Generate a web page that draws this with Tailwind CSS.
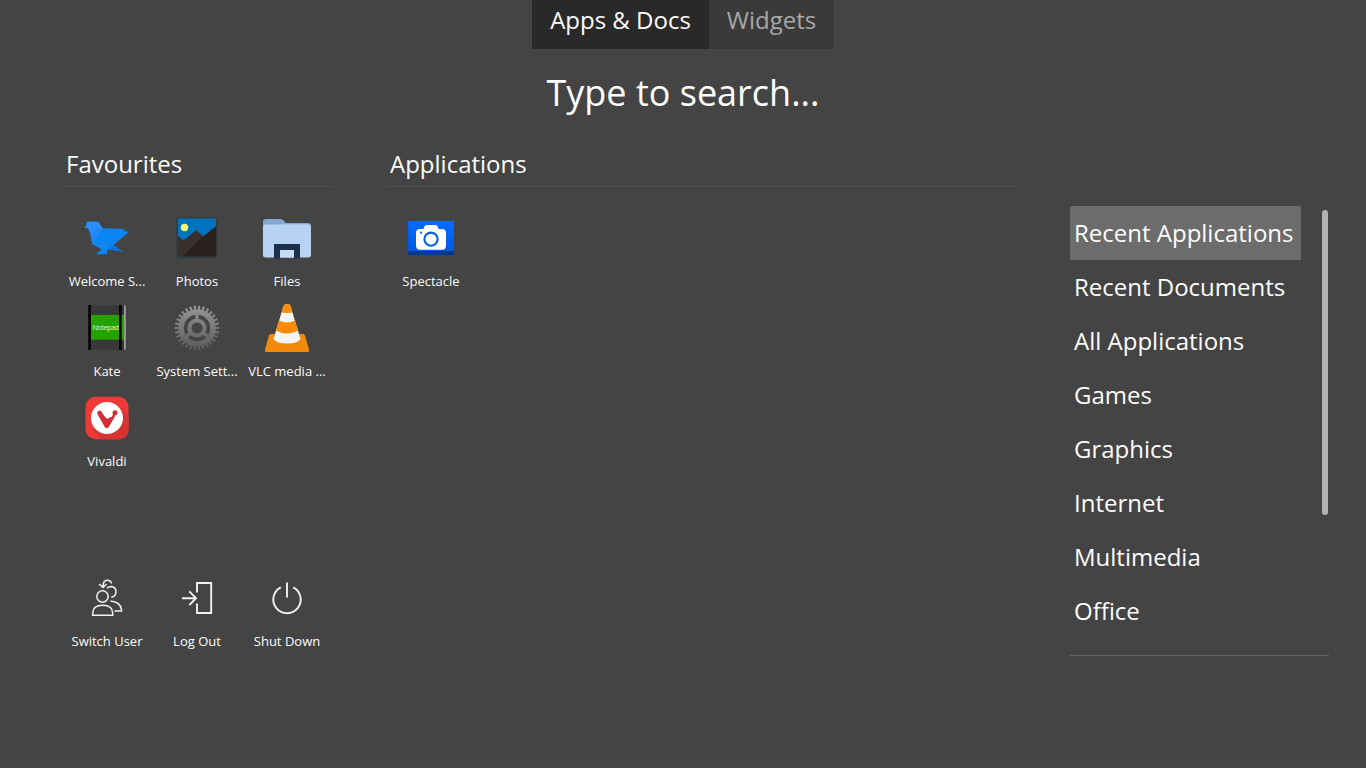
<!DOCTYPE html>
<html lang="en">
<head>
<meta charset="utf-8">
<title>Application Dashboard</title>
<script src="https://cdn.jsdelivr.net/npm/@tailwindcss/browser@4"></script>
</head>
<body class="bg-[#444444] overflow-hidden">
<div class="w-[1366px] h-[768px] bg-[#444444] text-[#fcfcfc] font-['Open_Sans',sans-serif] flex flex-col overflow-hidden">
  <nav class="flex justify-center h-[49px] text-2xl leading-[40px] whitespace-nowrap">
    <div class="w-[177px] bg-[#292929] text-center">Apps &amp; Docs</div>
    <div class="w-[125px] bg-[#3a3a3a] text-[#a8a8a8] text-center">Widgets</div>
  </nav>
  <div class="h-[91px] text-center text-4xl leading-[87px] text-white whitespace-nowrap">Type to search...</div>

  <main class="flex">
    <section class="ml-[62px] w-[270px]">
      <h2 class="h-[47px] pl-1 text-2xl leading-[48px] border-b border-[#505050]">Favourites</h2>
      <div class="mt-[13px] grid grid-cols-3 auto-rows-[90px] text-[13px] leading-[18px] text-center whitespace-nowrap">
        <div class="pt-[14px] flex flex-col items-center gap-[10px]">
          <svg class="size-12 shrink-0" viewBox="0 0 48 48">
            <path d="M2 14.300L4.300 7.700h11l4.400 6.600L42 15l-2 1.700 6 1.300-15.700 13L40 37.700l-15.300-2.400-1 5H13l5.700-5L9.300 30 6.500 16l-2-2.500z" fill="#0b85f1"/>
            <path d="M2 14.300L4.300 7.700h11l4.400 6.600L6.800 18 4.500 13.500z" fill="#2a8dfb"/>
            <path d="M6.500 16l13.200-1.700L9.300 30z" fill="#2488f4"/>
            <path d="M30.300 31L40 37.700l-15.300-2.400z" fill="#0a74dc"/>
            <path d="M9.300 30l15.400 1-6 4.300z" fill="#1d84ea"/>
          </svg><span>Welcome S...</span></div>
        <div class="pt-[14px] flex flex-col items-center gap-[10px]">
          <svg class="size-12 shrink-0" viewBox="0 0 48 48">
            <rect x="3.500" y="3.200" width="41" height="41" rx="2.500" fill="#34393d"/>
            <path d="M5 4.500h38v38H5z" fill="#0073bf"/>
            <path d="M5 22l5.500 4.500L23.500 16l7 6.500L43 12.500v30H5z" fill="#38312e"/>
            <path d="M9 42.500l21-20L43 12.500v30z" fill="#2a201d"/>
            <circle cx="11.500" cy="13.500" r="3.700" fill="#fff56b"/>
          </svg><span>Photos</span></div>
        <div class="pt-[14px] flex flex-col items-center gap-[10px]">
          <svg class="size-12 shrink-0" viewBox="0 0 48 48">
            <path d="M0 8q0-3 3-3h14q2 0 3 1l3 3h22q3 0 3 3v6H0z" fill="#84a6d2"/>
            <path d="M0 13q0-2.500 3-2.500h15l4-.2h23q3 0 3 3V41q0 2.500-3 2.500H3q-3 0-3-2.500z" fill="#b7d3f3"/>
            <path d="M17 36h15v7.500H17z" fill="#c4dcf6"/>
            <path d="M11 30h26v14.500h-6V36H17v8.500h-6z" fill="#1c2f4d"/>
          </svg><span>Files</span></div>
        <div class="pt-[14px] flex flex-col items-center gap-[10px]">
          <svg class="size-12 shrink-0" viewBox="0 0 48 48">
            <path d="M6 1.500h35.500v44H6z" fill="#383838"/>
            <path d="M8 11h33.300v24.700H8z" fill="#23a300"/>
            <path d="M5.200 1H8v45H5.200zM36 1h2.700v45H36z" fill="#060606"/>
            <path d="M41.200 1q1.500 0 1.500 2v41q0 2-1.500 2z" fill="#b0b0b0"/>
            <text x="9.600" y="26" font-size="7" textLength="26.500" fill="#e2f5de" font-family="Open Sans">Notepad</text>
          </svg><span>Kate</span></div>
        <div class="pt-[14px] flex flex-col items-center gap-[10px]">
          <svg class="size-12 shrink-0" viewBox="0 0 48 48">
            <defs><linearGradient id="gear" gradientUnits="userSpaceOnUse" x1="0" y1="2" x2="0" y2="46"><stop stop-color="#969696"/><stop offset="1" stop-color="#5a5a5a"/></linearGradient></defs>
            <g fill="none" stroke="url(#gear)">
              <circle cx="24" cy="24" r="16" stroke-width="5.600"/>
              <circle cx="24" cy="24" r="20.300" stroke-width="4" pathLength="120" stroke-dasharray="2 2" stroke-dashoffset="1"/>
              <circle cx="24" cy="24" r="7.600" stroke-width="4"/>
              <path d="M23.990 10L24.010 17M18 28.500l-6.500 5.500M30 28.500l6.500 5.500" stroke-width="3.300"/>
            </g>
          </svg><span>System Sett...</span></div>
        <div class="pt-[14px] flex flex-col items-center gap-[10px]">
          <svg class="size-12 shrink-0" viewBox="0 0 48 48">
            <path d="M8 30h32q1.500 0 2 1.500l4 14q.5 2.500-1.500 2.500h-41Q1.500 48 2 45.500l4-14Q6.500 30 8 30z" fill="#f28a0c"/>
            <defs><clipPath id="cone"><path d="M20.500 2q.8-2 3.500-2t3.500 2L37.500 35q-3 4.500-13.500 4.500t-13.500-4.500z"/></clipPath></defs>
            <g clip-path="url(#cone)">
              <path d="M8 0h32v42H8z" fill="#f4f4f4"/>
              <path d="M16 0h16v7.500q-8 3-16 0z" fill="#ff8d05"/>
              <path d="M8 16.500h8q8 4 16 0h8V27h-6q-10 5-20 0H8z" fill="#fb8b07"/>
            </g>
          </svg><span>VLC media ...</span></div>
        <div class="pt-[14px] flex flex-col items-center gap-[10px]">
          <svg class="size-12 shrink-0" viewBox="0 0 48 48">
            <rect x="2.500" y="2.700" width="43" height="42.600" rx="10" fill="#ef3939"/>
            <path d="M35 12.500l10.500 10V35q0 10.300-10 10.300H18L10 36z" fill="#d83232"/>
            <circle cx="24" cy="24" r="16" fill="#fff"/>
            <path d="M16.500 19l7.300 12.800 5.400-9.300" fill="none" stroke="#d03035" stroke-width="4.600" stroke-linecap="round" stroke-linejoin="round"/>
            <path d="M18.500 17.500q4.500 8.500 8 7.500 3.500-.8 3-6.500l3.500 2-5 7-5 1z" fill="#d03035"/>
            <circle cx="26" cy="19.500" r="4" fill="#fff"/>
            <circle cx="32" cy="18.700" r="2.500" fill="#d03035"/>
          </svg><span>Vivaldi</span></div>
      </div>
      <div class="mt-[90px] grid grid-cols-3 text-[13px] leading-[18px] text-center whitespace-nowrap">
        <div class="pt-[14px] flex flex-col items-center gap-[10px]">
          <svg class="size-12 shrink-0" viewBox="0 0 48 48" fill="none" stroke="#f2f2f2" stroke-width="1.500">
            <circle cx="19.500" cy="22.500" r="5.700"/>
            <path d="M9.700 41.300v-2.100q0-8 10-8t10 8v2.100zM31.500 36.900h7v-1.500q-1-7.600-11-8.500M24 14.200q1.500-1.700 4-1.700 5 .3 5 5.200 0 4.600-4.700 5.500M28.500 9.500q-.5-3.200-4.300-3.200-4.200 0-4.200 6.500M16 10l4 3.500 3.500-3.500"/>
          </svg><span>Switch User</span></div>
        <div class="pt-[14px] flex flex-col items-center gap-[10px]">
          <svg class="size-12 shrink-0" viewBox="0 0 48 48" fill="none" stroke="#f2f2f2" stroke-width="1.900">
            <path d="M24 18.500V9h14.200v30H24v-9.500M9 24.200h14M16.300 17.300l6.700 6.900-6.700 6.900"/>
          </svg><span>Log Out</span></div>
        <div class="pt-[14px] flex flex-col items-center gap-[10px]">
          <svg class="size-12 shrink-0" viewBox="0 0 48 48" fill="none" stroke="#f2f2f2" stroke-width="1.900">
            <path d="M24 8.500v15M17.800 13.300a13.700 13.700 0 1 0 12.400 0"/>
          </svg><span>Shut Down</span></div>
      </div>
    </section>

    <section class="ml-[54px] w-[630px]">
      <h2 class="h-[47px] pl-1 text-2xl leading-[48px] border-b border-[#505050]">Applications</h2>
      <div class="mt-[13px] grid grid-cols-7 text-[13px] leading-[18px] text-center whitespace-nowrap">
        <div class="pt-[14px] flex flex-col items-center gap-[10px]">
          <svg class="size-12 shrink-0" viewBox="0 0 48 48">
            <defs><linearGradient id="shot" x1="0" y1="0" x2="0" y2="1"><stop stop-color="#066cff"/><stop offset="1" stop-color="#0059e4"/></linearGradient></defs>
            <path d="M1.200 7H47v34H1.200z" fill="#043888"/>
            <path d="M1.200 7H47v30H1.200z" fill="url(#shot)"/>
            <path d="M13 15h3.500q1-4 3-4h9q2 0 3 4H35q4 0 4 4v12.200q0 4.500-4 4.500H13q-4 0-4-4.500V19q0-4 4-4z" fill="#fff"/>
            <circle cx="24" cy="25.200" r="6.600" fill="none" stroke="#075fe8" stroke-width="2.100"/>
            <circle cx="14" cy="18.700" r="1.100" fill="#075fe8"/>
          </svg><span>Spectacle</span></div>
      </div>
    </section>

    <aside class="ml-[54px] mt-[66px] w-[259px] h-[450px] flex justify-between border-b border-[#636363]">
      <ul class="w-[231px] text-2xl leading-[54px] whitespace-nowrap">
        <li class="h-[54px] pl-1 bg-[#6c6c6c] rounded-xs">Recent Applications</li>
        <li class="h-[54px] pl-1">Recent Documents</li>
        <li class="h-[54px] pl-1">All Applications</li>
        <li class="h-[54px] pl-1">Games</li>
        <li class="h-[54px] pl-1">Graphics</li>
        <li class="h-[54px] pl-1">Internet</li>
        <li class="h-[54px] pl-1">Multimedia</li>
        <li class="h-[54px] pl-1">Office</li>
      </ul>
      <div class="mt-1 mr-px w-[6px] h-[305px] rounded-full bg-[#b3b3b3]"></div>
    </aside>
  </main>
</div>
</body>
</html>
